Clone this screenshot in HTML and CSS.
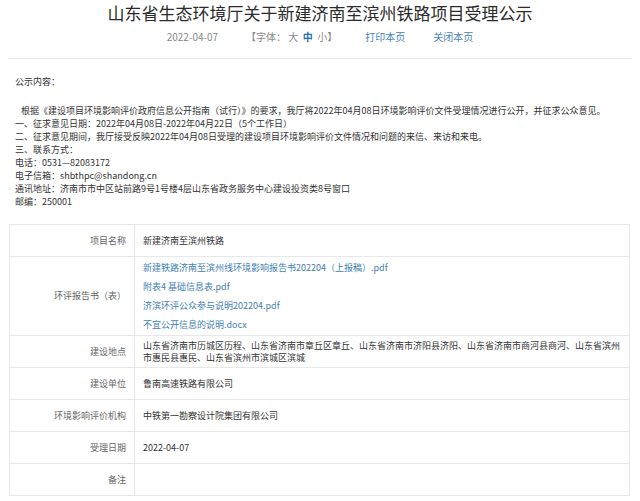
FILE: index.html
```html
<!DOCTYPE html>
<html>

<head>
  <meta charset="utf-8" />
  <title>山东省生态环境厅关于新建济南至滨州铁路项目受理公示</title>
  <meta name="viewport" content="width=device-width, initial-scale=1" />
  <link rel="stylesheet" href="styles.css">
</head>

<body>
  <div class="cabecera">
    <h1 class="titulo">山东省生态环境厅关于新建济南至滨州铁路项目受理公示</h1>
    <div class="meta">
      <span class="fecha">2022-04-07</span>
      <span class="fuente">【字体：&nbsp;大&nbsp;&nbsp;<b class="activo">中</b>&nbsp;&nbsp;小】</span>
      <a class="accion">打印本页</a>
      <a class="accion">关闭本页</a>
    </div>
  </div>

  <div class="articulo">
    <div class="texto">
      <p class="rotulo">公示内容：</p>
      <div class="parrafo">
        <div class="sangria">根据《建设项目环境影响评价政府信息公开指南（试行）》的要求，我厅将2022年04月08日环境影响评价文件受理情况进行公开，并征求公众意见。</div>
        <div>一、征求意见日期：2022年04月08日-2022年04月22日（5个工作日）</div>
        <div>二、征求意见期间，我厅接受反映2022年04月08日受理的建设项目环境影响评价文件情况和问题的来信、来访和来电。</div>
        <div>三、联系方式：</div>
        <div>电话：0531—82083172</div>
        <div>电子信箱：shbthpc@shandong.cn</div>
        <div>通讯地址：济南市市中区站前路9号1号楼4层山东省政务服务中心建设投资类8号窗口</div>
        <div>邮编：250001</div>
      </div>
    </div>

    <table class="tabla">
      <tr>
        <td class="etiqueta">项目名称</td>
        <td class="valor">新建济南至滨州铁路</td>
      </tr>
      <tr class="fila-archivos">
        <td class="etiqueta">环评报告书（表）</td>
        <td class="valor archivos">
          <a class="archivo">新建铁路济南至滨州线环境影响报告书202204（上报稿）.pdf</a>
          <a class="archivo">附表4 基础信息表.pdf</a>
          <a class="archivo">济滨环评公众参与说明202204.pdf</a>
          <a class="archivo">不宜公开信息的说明.docx</a>
        </td>
      </tr>
      <tr>
        <td class="etiqueta">建设地点</td>
        <td class="valor">山东省济南市历城区历程、山东省济南市章丘区章丘、山东省济南市济阳县济阳、山东省济南市商河县商河、山东省滨州市惠民县惠民、山东省滨州市滨城区滨城</td>
      </tr>
      <tr>
        <td class="etiqueta">建设单位</td>
        <td class="valor">鲁南高速铁路有限公司</td>
      </tr>
      <tr>
        <td class="etiqueta">环境影响评价机构</td>
        <td class="valor">中铁第一勘察设计院集团有限公司</td>
      </tr>
      <tr>
        <td class="etiqueta">受理日期</td>
        <td class="valor">2022-04-07</td>
      </tr>
      <tr>
        <td class="etiqueta">备注</td>
        <td class="valor"></td>
      </tr>
    </table>
  </div>
</body>

</html>
```

FILE: styles.css
```css
body {
  margin: 0;
  font-family: "Noto Sans CJK SC", "Noto Sans", sans-serif;
  color: #333;
  background: #fff;
}

.cabecera {
  margin: 0 8px;
  border-bottom: solid 1px #e8e8e8;
  padding-bottom: 14px;
}

.titulo {
  margin: 0;
  font-size: 17px;
  font-weight: normal;
  line-height: 26px;
  text-align: center;
  color: #2b2b2b;
}

.meta {
  margin-top: 4px;
  display: flex;
  justify-content: center;
  gap: 28px;
  font-size: 10px;
  line-height: 14px;
  color: #888;
}

.activo {
  color: #1f6fb2;
  font-weight: bold;
}

.accion {
  color: #4a83b5;
}

.articulo {
  padding: 0 10px 0 9px;
}

.texto {
  padding-left: 6px;
  font-size: 9px;
  line-height: 13px;
}

.rotulo {
  margin: 16px 0 0;
}

.parrafo {
  margin-top: 16px;
}

.sangria {
  text-indent: 6px;
}

.tabla {
  margin-top: 16px;
  width: 100%;
  border-collapse: collapse;
  font-size: 9px;
  line-height: 12px;
}

.tabla td {
  border: solid 1px #e8e8e8;
  height: 31px;
  padding: 0 8px;
  vertical-align: middle;
}

.etiqueta {
  width: 108px;
  text-align: right;
  color: #666;
}

.valor {
  color: #333;
}

.archivos {
  padding: 1px 8px !important;
}

.archivo {
  display: block;
  line-height: 19px;
  color: #3f7fb4;
}
```
